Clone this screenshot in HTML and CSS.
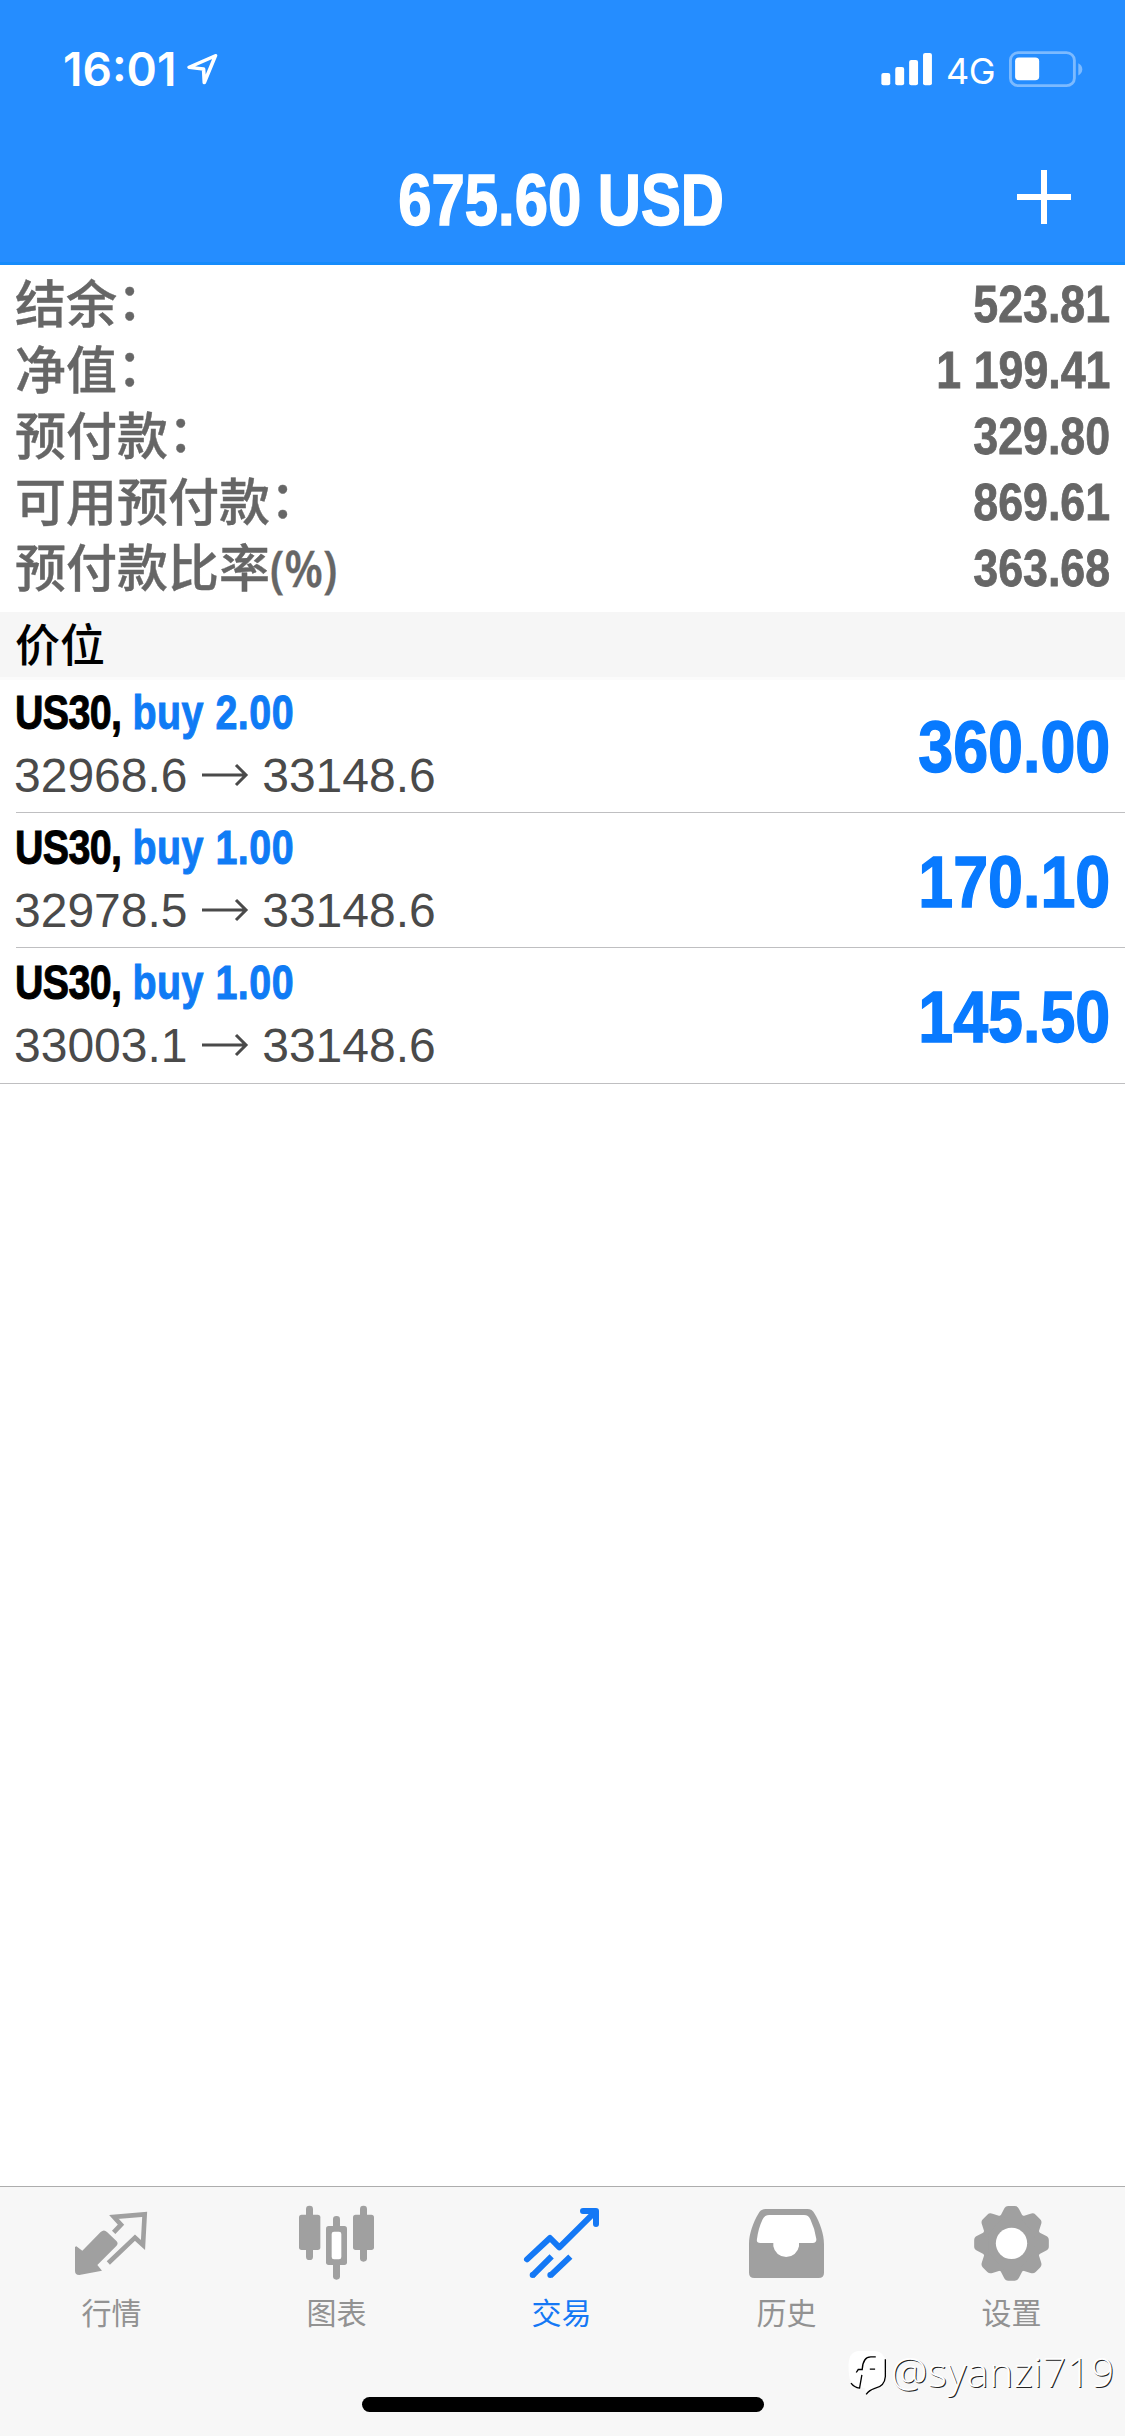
FILE: index.html
```html
<!DOCTYPE html>
<html lang="zh-CN">
<head>
<meta charset="utf-8">
<title>交易</title>
<link rel="stylesheet" href="styles.css">
</head>
<body>
<div class="app">
  <header class="header">
    <div class="status">
      <div class="status-left">
        <span class="time">16:01</span>
        <svg class="location" viewBox="522 158 86 96" width="31" height="32" preserveAspectRatio="none"><path d="M601 166 L528 201 L568 206 L570 247 Z" fill="none" stroke="#fff" stroke-width="10" stroke-linejoin="round"/></svg>
      </div>
      <svg class="signal" viewBox="890 156 146 102" width="52" height="34" preserveAspectRatio="none" fill="#fff"><rect x="891" y="219" width="25" height="37" rx="6"/><rect x="930" y="201" width="25" height="55" rx="6"/><rect x="969" y="180" width="25" height="76" rx="6"/><rect x="1008" y="159" width="25" height="97" rx="6"/></svg>
      <span class="network">4G</span>
      <svg class="battery" viewBox="1244 154 206 106" width="74" height="36" preserveAspectRatio="none"><rect x="1248" y="159" width="178" height="97" rx="22" fill="none" stroke="#7cbaff" stroke-width="8"/><rect x="1261" y="173" width="67" height="67" rx="11" fill="#fff"/><path d="M1437 190 Q1448 196 1448 208 Q1448 220 1437 226 Z" fill="#7cbaff"/></svg>
    </div>
    <div class="navbar">
      <h1 class="title"><span class="cond">675.60 USD</span></h1>
      <svg class="add" viewBox="0 0 54 54" width="54" height="54" stroke="#fff" stroke-width="6"><path d="M27 0V54M0 27H54"/></svg>
    </div>
  </header>

  <section class="summary">
    <div class="line"><span class="label">结余<i>：</i></span><span class="value">523.81</span></div>
    <div class="line"><span class="label">净值<i>：</i></span><span class="value">1 199.41</span></div>
    <div class="line"><span class="label">预付款<i>：</i></span><span class="value">329.80</span></div>
    <div class="line"><span class="label">可用预付款<i>：</i></span><span class="value">869.61</span></div>
    <div class="line"><span class="label">预付款比率<b>(%)</b></span><span class="value">363.68</span></div>
  </section>

  <h2 class="section">价位</h2>

  <main class="positions">
    <article class="position">
      <div class="info">
        <div class="deal"><span class="symbol">US30,</span> <span class="side">buy 2.00</span></div>
        <div class="prices">32968.6 <svg class="arrow" viewBox="0 0 48 24" width="48" height="24"><path d="M1 12H45M35 2L45 12L35 22"/></svg> 33148.6</div>
      </div>
      <div class="profit">360.00</div>
    </article>
    <article class="position">
      <div class="info">
        <div class="deal"><span class="symbol">US30,</span> <span class="side">buy 1.00</span></div>
        <div class="prices">32978.5 <svg class="arrow" viewBox="0 0 48 24" width="48" height="24"><path d="M1 12H45M35 2L45 12L35 22"/></svg> 33148.6</div>
      </div>
      <div class="profit">170.10</div>
    </article>
    <article class="position">
      <div class="info">
        <div class="deal"><span class="symbol">US30,</span> <span class="side">buy 1.00</span></div>
        <div class="prices">33003.1 <svg class="arrow" viewBox="0 0 48 24" width="48" height="24"><path d="M1 12H45M35 2L45 12L35 22"/></svg> 33148.6</div>
      </div>
      <div class="profit">145.50</div>
    </article>
  </main>

  <footer class="footer">
    <nav class="tabs">
      <a class="tab">
        <svg viewBox="0 60 675 285" width="225" height="95"><path d="M229 229L247 242L302 186Q312 177 321 186L350 214Q356 221 349 228L292 285L306 302L238 315Q225 315 225 303V231Z" fill="currentColor"/><path d="M341 187L363 164L342 141L434 133L429 225L405 203L325 279" fill="none" stroke="currentColor" stroke-width="14"/></svg>
        <span>行情</span>
      </a>
      <a class="tab">
        <svg viewBox="675 60 675 285" width="225" height="95"><g fill="currentColor"><rect x="897" y="134" width="64" height="106" rx="8"/><rect x="918" y="107" width="21" height="163" rx="10"/><rect x="1059" y="134" width="63" height="106" rx="8"/><rect x="1080" y="107" width="21" height="168" rx="10"/><rect x="978" y="168" width="63" height="117" rx="8"/><rect x="999" y="138" width="21" height="191" rx="10"/></g><rect x="995" y="185" width="29" height="83" rx="7" fill="#fff"/></svg>
        <span>图表</span>
      </a>
      <a class="tab active">
        <svg viewBox="150 60 675 285" width="225" height="95"><g fill="none" stroke="currentColor" stroke-width="18" stroke-linecap="round" stroke-linejoin="round"><path d="M381 268L450 204L478 232L586 125M549 123H588V162"/><path stroke-linecap="butt" d="M397 317L455 259M451 317L511 260"/></g><g fill="currentColor"><circle cx="398" cy="315" r="9"/><circle cx="451" cy="315" r="9"/></g></svg>
        <span>交易</span>
      </a>
      <a class="tab">
        <svg viewBox="-150 60 675 285" width="225" height="95"><path d="M122 117H247Q262 117 268 130C285 158 297 193 297 222V308Q297 324 281 324H88Q72 324 72 308V222C72 193 84 158 101 130Q107 117 122 117Z" fill="currentColor"/><path d="M133 135H237Q251 135 256 148Q269 175 274 207Q275 219 263 219H222V229A39 38 0 0 1 145 229V219H106Q93 219 96 207Q100 175 113 148Q119 135 133 135Z" fill="#fff"/></svg>
        <span>历史</span>
      </a>
      <a class="tab">
        <svg viewBox="525 60 675 285" width="225" height="95"><defs><path id="tooth" d="M820 150L837 117Q841 108 850 108H869Q878 108 882 117L899 150Z"/></defs><g fill="currentColor"><circle cx="859.500" cy="220" r="90"/><use href="#tooth"/><use href="#tooth" transform="rotate(45 859.500 220)"/><use href="#tooth" transform="rotate(90 859.500 220)"/><use href="#tooth" transform="rotate(135 859.500 220)"/><use href="#tooth" transform="rotate(180 859.500 220)"/><use href="#tooth" transform="rotate(225 859.500 220)"/><use href="#tooth" transform="rotate(270 859.500 220)"/><use href="#tooth" transform="rotate(315 859.500 220)"/></g><circle cx="859.500" cy="220" r="47" fill="#fff"/></svg>
        <span>设置</span>
      </a>
    </nav>
    <div class="home-indicator"></div>
    <div class="watermark">
      <svg viewBox="366 550 124 140" width="41" height="47"><path d="M400 555H450Q482 558 482 590V630Q480 660 450 668Q432 674 424 686L420 668Q385 664 374 640Q366 590 376 570Q385 557 400 555Z" fill="#fff"/><path d="M482 580V632Q480 662 450 668Q432 674 424 686M378 652Q388 665 404 667L411 627M394 620L400 611H412Q414 573 438 573H453M435 610H451" fill="none" stroke="#000" stroke-width="4"/></svg>
      <span>@syanzi719</span>
    </div>
  </footer>
</div>
</body>
</html>
```
FILE: styles.css
```css
* { box-sizing: border-box; }

body {
  margin: 0;
  background: #fff;
  font-family: "Liberation Sans", "Noto Sans CJK SC", sans-serif;
}

.app {
  position: relative;
  width: 1125px;
  height: 2436px;
  display: flex;
  flex-direction: column;
  overflow: hidden;
}

.header {
  height: 265px;
  background: #258dff;
  border-bottom: 3px solid #168bfb;
  color: #fff;
}

.status {
  height: 132px;
  padding: 6px 42px 0 63px;
  display: flex;
  align-items: center;
}

.status-left {
  flex: 1;
  display: flex;
  align-items: center;
  gap: 11px;
}

.time {
  font: 600 46px/56px Inter, sans-serif;
}

.network {
  margin: 3px 14px 0 13px;
  font: 400 36px/44px Inter, sans-serif;
  letter-spacing: -0.5px;
}

.navbar {
  height: 130px;
  padding: 0 54px 0 52px;
  display: grid;
  grid-template-columns: 54px 1fr 54px;
  align-items: center;
}

.title {
  grid-column: 2;
  margin: 5px 0 0;
  font-size: 72px;
  line-height: 80px;
  text-align: center;
  white-space: nowrap;
  -webkit-text-stroke: 1.6px currentColor;
}

.cond {
  display: inline-block;
  transform: scaleX(0.83);
}

.summary {
  height: 347px;
  padding: 3px 15px 0 15px;
  color: #666;
}

.line {
  height: 66px;
  display: flex;
  justify-content: space-between;
}

.label {
  font: 500 51px/66px "Noto Sans CJK SC", sans-serif;
  -webkit-text-stroke: 0.4px currentColor;
}

.label i {
  font-style: normal;
  line-height: 1;
  vertical-align: 3px;
}

.label b {
  display: inline-block;
  font: 600 51px/1 "Open Sans", sans-serif;
  transform: scaleX(0.88);
  transform-origin: left;
}

.value {
  font: 700 52px/72px "Liberation Sans", sans-serif;
  -webkit-text-stroke: 0.8px currentColor;
  transform: scaleX(0.86);
  transform-origin: right;
}

.section {
  height: 65px;
  margin: 0 0 1px;
  padding-left: 15px;
  background: #f6f6f6;
  box-shadow: 0 3px 0 #fbfbfb;
  color: #000;
  font: 500 45px/62px "Noto Sans CJK SC", sans-serif;
}

.position {
  height: 135px;
  margin-left: 16px;
  padding-right: 15px;
  border-bottom: 1px solid #bfbfc1;
  display: flex;
  justify-content: space-between;
}

.position:last-child {
  height: 136px;
  margin-left: 0;
  padding-left: 16px;
}

.deal {
  height: 66px;
  padding-top: 4px;
  font-weight: 700;
  font-size: 49px;
  line-height: 60px;
  color: #000;
  white-space: nowrap;
  -webkit-text-stroke: 1px currentColor;
  transform: translateX(-1px) scaleX(0.805);
  transform-origin: left;
}

.symbol { letter-spacing: -0.8px; }

.side {
  color: #0f7bf5;
  letter-spacing: 0.6px;
}

.prices {
  height: 62px;
  margin-left: -2px;
  font-size: 48px;
  line-height: 64px;
  color: #4a4a4a;
  white-space: nowrap;
}

.arrow {
  vertical-align: 5px;
  fill: none;
  stroke: #4a4a4a;
  stroke-width: 3;
}

.profit {
  font-weight: 700;
  font-size: 73px;
  line-height: 138px;
  color: #087aff;
  -webkit-text-stroke: 1.4px currentColor;
  transform: scaleX(0.86);
  transform-origin: right;
}

.footer {
  position: relative;
  height: 250px;
  margin-top: auto;
  border-top: 1px solid #adadad;
  background: #f7f7f7;
}

.tabs {
  display: grid;
  grid-template-columns: repeat(5, 1fr);
  padding-top: 3px;
}

.tab {
  display: flex;
  flex-direction: column;
  align-items: center;
  color: #a0a0a0;
  font: 400 30px/44px "Noto Sans CJK SC", sans-serif;
}

.tab span {
  margin: 4px 2px 2px 0;
  color: #929292;
}

.tab.active,
.tab.active span { color: #1478f5; }

.home-indicator {
  width: 402px;
  height: 15px;
  margin: 62px auto 0;
  border-radius: 8px;
  background: #000;
}

.watermark {
  position: absolute;
  left: 847px;
  top: 162px;
  display: flex;
  align-items: center;
  gap: 3px;
  color: #fff;
  font: 300 41px/50px "Open Sans", sans-serif;
  letter-spacing: 0.5px;
  text-shadow: 1px 1px 0 #222;
}

.watermark span { margin-top: -3px; }
```
